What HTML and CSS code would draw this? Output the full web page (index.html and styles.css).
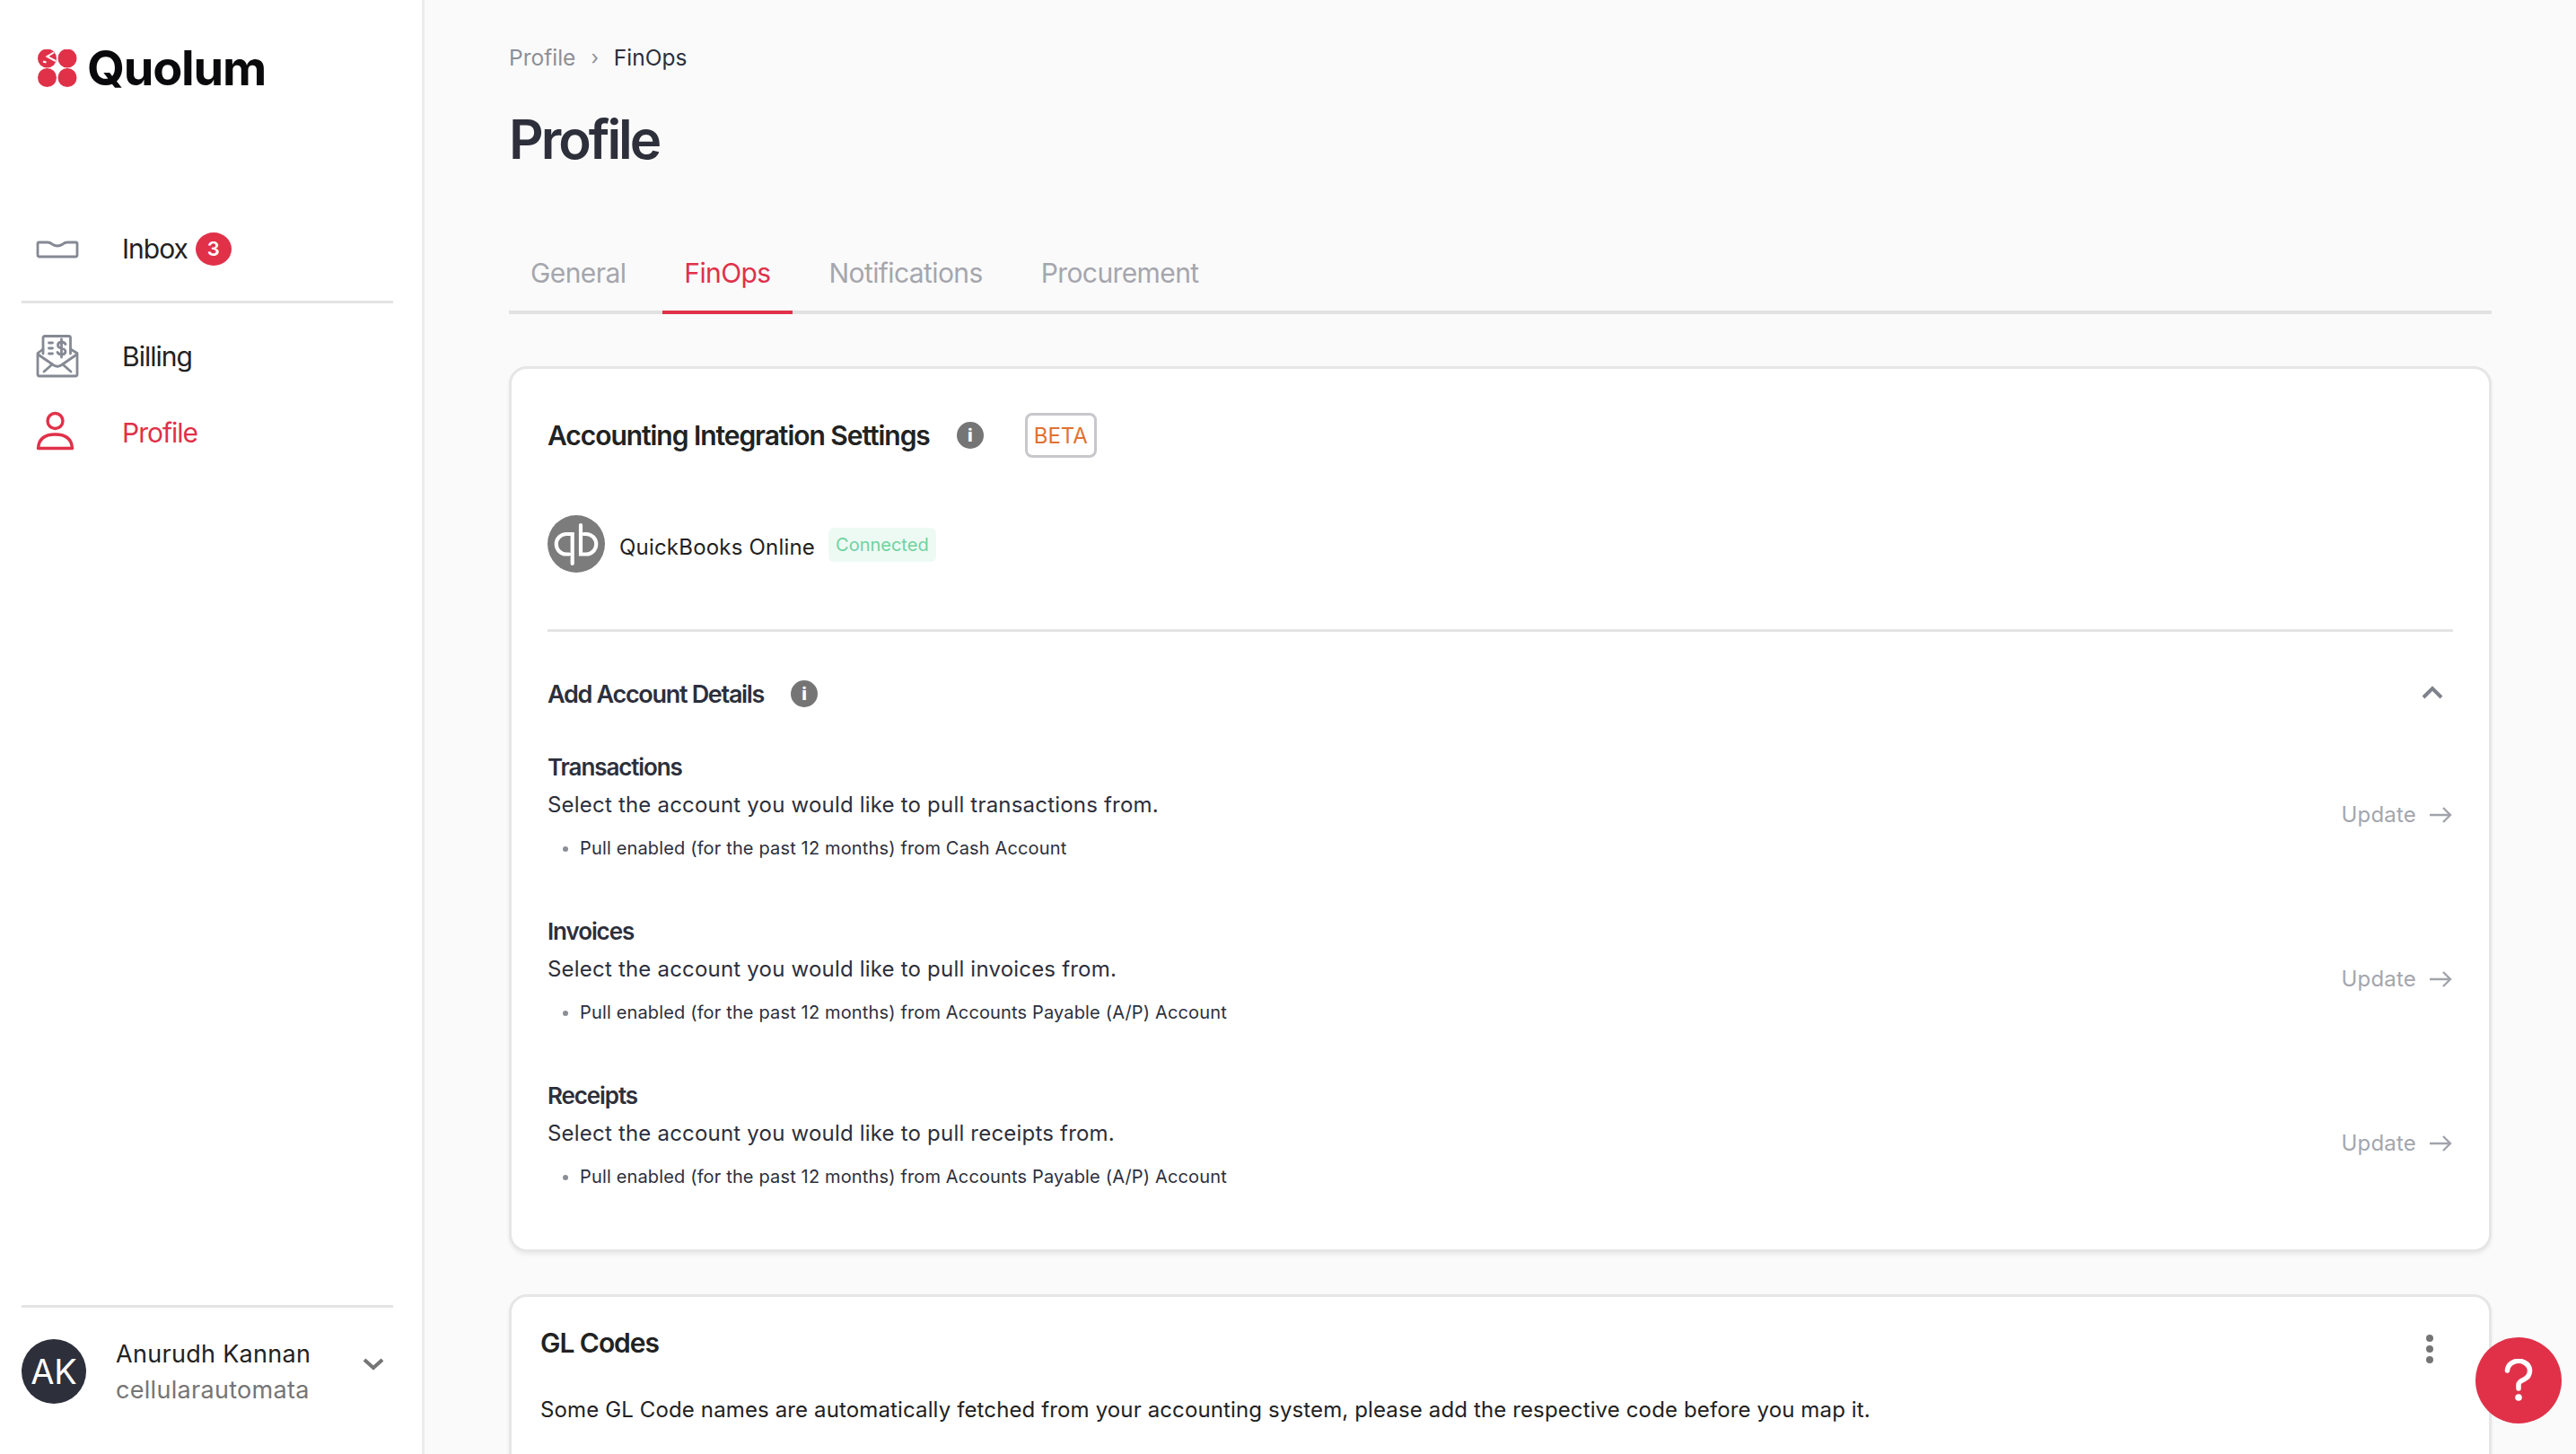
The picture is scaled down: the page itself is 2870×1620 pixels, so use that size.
FILE: index.html
```html
<!DOCTYPE html>
<html lang="en-US">
<head>
<meta charset="UTF-8">
<title>Profile - FinOps</title>
<link rel="stylesheet" href="styles.css">
</head>
<body>
<div class="app">
	<aside class="sidebar">
		<div class="logo">
			<svg class="logo-mark" viewBox="0 0 44 42"><circle cx="10.500" cy="10" r="10.500" fill="#e03149"/><circle cx="33" cy="10" r="10.500" fill="#e03149"/><circle cx="10.500" cy="31.500" r="10.500" fill="#e03149"/><circle cx="33" cy="31.500" r="10.500" fill="#e03149"/><path d="M18 3.500 L10.500 8 L20 13 M6 13.500 L9.500 14.500" fill="none" stroke="#fff" stroke-width="2"/></svg>
			<span class="logo-text">Quolum</span>
		</div>
		<nav class="nav">
			<a class="nav-item nav-inbox">
				<svg class="nav-icon" viewBox="0 0 48 48"><path d="M2 18.500 Q2 17 3.500 17 H13 Q16 17 18 19 Q24 23 30 19 Q32 17 35 17 H44.500 Q46 17 46 18.500 V31 Q46 33 44 33 H4 Q2 33 2 31 Z" fill="none" stroke="#858993" stroke-width="2.800"/></svg>
				<span>Inbox</span><b class="count">3</b>
			</a>
			<div class="nav-sep"></div>
			<a class="nav-item">
				<svg class="nav-icon" viewBox="0 0 48 48"><g fill="none" stroke="#858993" stroke-width="2.800" stroke-linejoin="round" stroke-linecap="round"><path d="M8 21 V3.500 Q8 1.500 10 1.500 H36.500 Q38.500 1.500 38.500 3.500 V21"/><path d="M8 16 L2 20.500 V44 Q2 46 4 46 H44 Q46 46 46 44 V20.500 L38.500 16"/><path d="M2.500 22 L20 34 Q24 36.500 28 34 L45.500 22"/><path d="M9 41 L17 34 M39 41 L31 34"/><path d="M14.500 9 H18.500 M14.500 15 H18.500 M14.500 21 H18.500"/><path d="M33 10.500 Q31.500 8 28.500 8 Q24.500 8.500 24.500 11.500 Q24.500 14.500 28.500 15 Q33 16 33 19 Q32.500 22 28.500 22 Q25.500 22 24 19.500 M28.500 5 V25"/></g></svg>
				<span>Billing</span>
			</a>
			<a class="nav-item active">
				<svg class="nav-icon" viewBox="0 0 48 48"><g fill="none" stroke="#e03149" stroke-width="3.400"><circle cx="21.500" cy="11" r="8.500"/><path d="M2.500 41.500 Q3.500 26 21.500 26 Q39.500 26 40.500 41.500 Z" stroke-linejoin="round"/></g></svg>
				<span>Profile</span>
			</a>
		</nav>
		<div class="user">
			<div class="avatar">AK</div>
			<div class="user-text">
				<div class="user-name">Anurudh Kannan</div>
				<div class="user-org">cellularautomata</div>
			</div>
			<svg class="user-chevron" viewBox="0 0 24 16"><path d="M2 3 L12 12 L22 3" fill="none" stroke="#757575" stroke-width="4"/></svg>
		</div>
	</aside>

	<main class="main">
		<div class="crumbs"><span>Profile</span><i>›</i><b>FinOps</b></div>
		<h1 class="title">Profile</h1>
		<div class="tabs">
			<a class="tab">General</a>
			<a class="tab active">FinOps</a>
			<a class="tab">Notifications</a>
			<a class="tab">Procurement</a>
		</div>

		<section class="card card-accounting">
			<div class="card-head">
				<h2>Accounting Integration Settings</h2>
				<span class="info info-lg">i</span>
				<span class="beta">BETA</span>
			</div>
			<div class="qb-row">
				<svg class="qb-logo" viewBox="0 0 64 64"><circle cx="32" cy="32" r="32" fill="#7c7c7c"/><g fill="none" stroke="#fff" stroke-width="4.200" stroke-linecap="round"><path d="M27.700 54 V21 H21 A11.250 11.250 0 0 0 21 43.500 H24"/><path d="M37 11 V43.500 H43 A11.250 11.250 0 0 0 43 21 H40.500"/></g></svg>
				<span class="qb-name">QuickBooks Online</span>
				<span class="connected">Connected</span>
			</div>
			<div class="details-head">
				<h3>Add Account Details</h3>
				<span class="info">i</span>
				<svg class="collapse" viewBox="0 0 24 16"><path d="M2 13 L12 3 L22 13" fill="none" stroke="#7f828c" stroke-width="4"/></svg>
			</div>

			<div class="pull">
				<div class="pull-text">
					<h4>Transactions</h4>
					<p>Select the account you would like to pull transactions from.</p>
					<ul><li>Pull enabled (for the past 12 months) from Cash Account</li></ul>
				</div>
				<a class="update">Update<svg viewBox="0 0 26 20"><path d="M1 10 H24 M16 2 L24 10 L16 18" fill="none" stroke="#a2a4ac" stroke-width="2.400"/></svg></a>
			</div>
			<div class="pull">
				<div class="pull-text">
					<h4>Invoices</h4>
					<p>Select the account you would like to pull invoices from.</p>
					<ul><li>Pull enabled (for the past 12 months) from Accounts Payable (A/P) Account</li></ul>
				</div>
				<a class="update">Update<svg viewBox="0 0 26 20"><path d="M1 10 H24 M16 2 L24 10 L16 18" fill="none" stroke="#a2a4ac" stroke-width="2.400"/></svg></a>
			</div>
			<div class="pull">
				<div class="pull-text">
					<h4>Receipts</h4>
					<p>Select the account you would like to pull receipts from.</p>
					<ul><li>Pull enabled (for the past 12 months) from Accounts Payable (A/P) Account</li></ul>
				</div>
				<a class="update">Update<svg viewBox="0 0 26 20"><path d="M1 10 H24 M16 2 L24 10 L16 18" fill="none" stroke="#a2a4ac" stroke-width="2.400"/></svg></a>
			</div>
		</section>

		<section class="card card-gl">
			<div class="gl-head">
				<h2>GL Codes</h2>
				<div class="dots"><i></i><i></i><i></i></div>
			</div>
			<p>Some GL Code names are automatically fetched from your accounting system, please add the respective code before you map it.</p>
		</section>
	</main>
</div>

<a class="help"><svg viewBox="0 0 32 48"><path d="M3.500 13 A12.500 11 0 1 1 22 23 Q16 25.500 16 29 V33" fill="none" stroke="#fff" stroke-width="5.500" stroke-linecap="round"/><circle cx="16" cy="43" r="3.800" fill="#fff"/></svg></a>
</body>
</html>
```
FILE: styles.css
```css
* { box-sizing:border-box; }
html, body { margin:0; padding:0; height:100%; overflow:hidden; }
body { font:normal 26px Inter,"Liberation Sans",sans-serif; color:#2d2f3b; background:#fafafa; }
h1, h2, h3, h4, p, ul { margin:0; padding:0; }

.app { display:flex; height:1620px; }

/* sidebar */
.sidebar { display:flex; flex-direction:column; flex:none; width:473px; height:100%; padding:0 32px 0 24px; background:#fff; border-right:3px solid #ececec; }
.logo { display:flex; align-items:center; height:152px; padding-left:18px; }
.logo-mark { width:44px; height:42px; margin-right:11px; }
.logo-text { font-size:54px; line-height:54px; font-weight:700; letter-spacing:-1.200px; color:#0a0a0c; }
.nav { flex:1; padding-top:93px; }
.nav-item { display:flex; align-items:center; height:64px; padding-left:16px; font-size:30px; letter-spacing:-1px; color:#222; }
.nav-icon { width:48px; height:48px; margin-right:48px; }
.nav-item.active { margin-top:21px; color:#e03149; }
.nav-sep { height:3px; margin:26px 0 27px; background:#e4e4e4; }
.count { display:flex; align-items:center; justify-content:center; width:40px; height:37px; margin-left:9px; font-size:22px; font-weight:600; letter-spacing:0; color:#fff; background:#e03149; border-radius:50%; }

.user { display:flex; align-items:center; height:166px; padding-bottom:22px; border-top:3px solid #e4e4e4; }
.avatar { display:flex; align-items:center; justify-content:center; flex:none; width:72px; height:72px; font-size:38px; color:#fff; background:#2d2f3b; border-radius:50%; }
.user-text { flex:1; margin-left:33px; margin-top:2px; }
.user-name { font-size:27px; line-height:40px; letter-spacing:.3px; color:#222; }
.user-org { font-size:27px; line-height:40px; letter-spacing:.3px; color:#757575; }
.user-chevron { width:24px; height:16px; margin-right:10px; margin-bottom:16px; }

/* main column */
.main { flex:1; min-width:0; padding:46px 94px 0 94px; }
.crumbs { display:flex; align-items:center; height:36px; font-size:24.500px; color:#8d8f97; }
.crumbs i { margin:0 17px; font-style:normal; font-size:22px; }
.crumbs b { font-weight:400; color:#2d2f3b; }
.title { margin-top:35px; font-size:60px; line-height:76px; font-weight:600; letter-spacing:-3px; color:#2d2f3b; }

.tabs { display:flex; gap:17px; margin-top:78px; height:79px; border-bottom:4px solid #e2e2e2; }
.tab { height:79px; padding:0 24px; font-size:30px; line-height:66px; letter-spacing:-.6px; color:#a5a6ad; border-bottom:4px solid transparent; }
.tab.active { color:#e03149; border-bottom-color:#e03149; }

.card { background:#fff; border:3px solid #e6e6e6; border-radius:20px; box-shadow:0 3px 4px rgba(0,0,0,.06); }
.card h2 { font-size:30px; font-weight:600; letter-spacing:-1.050px; color:#222; }

.card-accounting { margin-top:58px; height:987px; padding:0 40px; }
.card-head { display:flex; align-items:center; height:100px; margin-top:24px; }
.info { display:flex; align-items:center; justify-content:center; width:30px; height:30px; font-size:20px; font-weight:800; color:#fff; background:#757575; border-radius:50%; }
.info-lg { margin-left:30px; }
.beta { display:flex; align-items:center; justify-content:center; width:80px; height:50px; margin-left:46px; font-size:24px; color:#e27132; border:3px solid #c7c7cc; border-radius:8px; }

.qb-row { display:flex; align-items:center; height:64px; margin-top:39px; }
.qb-logo { width:64px; height:64px; margin-right:16px; }
.qb-name { margin-top:6px; font-size:24px; letter-spacing:.2px; color:#222; }
.connected { display:flex; align-items:center; height:38px; margin-top:2px; margin-left:15px; padding:0 8px; font-size:20px; color:#6ed39f; background:#edfaf4; border-radius:6px; }

.details-head { display:flex; align-items:center; height:70px; margin-top:63px; border-top:3px solid #e4e4e4; box-sizing:content-box; padding-top:34px; }
.details-head h3 { font-size:27px; font-weight:600; letter-spacing:-1.300px; }
.details-head .info { margin-left:30px; }
.collapse { width:24px; height:16px; margin-left:auto; margin-right:11px; margin-bottom:3px; }

.pull { display:flex; align-items:center; height:183px; }
.pull-text { flex:1; }
.pull h4 { font-size:26px; line-height:36px; font-weight:600; letter-spacing:-1.100px; }
.pull p { margin-top:6px; font-size:24px; line-height:36px; letter-spacing:.2px; }
.pull ul { margin-top:12px; padding-left:36px; list-style:disc; }
.pull li { font-size:20px; line-height:36px; letter-spacing:.15px; }
.pull li::marker { font-size:20px; color:#8d8f97; }
.update { display:flex; align-items:center; gap:14px; margin-top:16px; margin-right:1px; font-size:24px; letter-spacing:.2px; color:#a5a6ad; }
.update svg { width:26px; height:20px; }

.card-gl { margin-top:47px; height:400px; padding:0 40px 0 32px; }
.gl-head { display:flex; align-items:center; justify-content:space-between; height:56px; margin-top:23px; }
.dots { display:flex; flex-direction:column; gap:4px; margin-right:22px; margin-top:14px; }
.dots i { width:8px; height:8px; background:#757575; border-radius:50%; }
.card-gl p { margin-top:29px; font-size:24px; line-height:36px; letter-spacing:.13px; color:#222; }

/* floating help button */
.help { position:absolute; left:2758px; top:1490px; display:flex; align-items:center; justify-content:center; width:96px; height:96px; background:#e03149; border-radius:50%; }
.help svg { width:32px; height:48px; }
```
